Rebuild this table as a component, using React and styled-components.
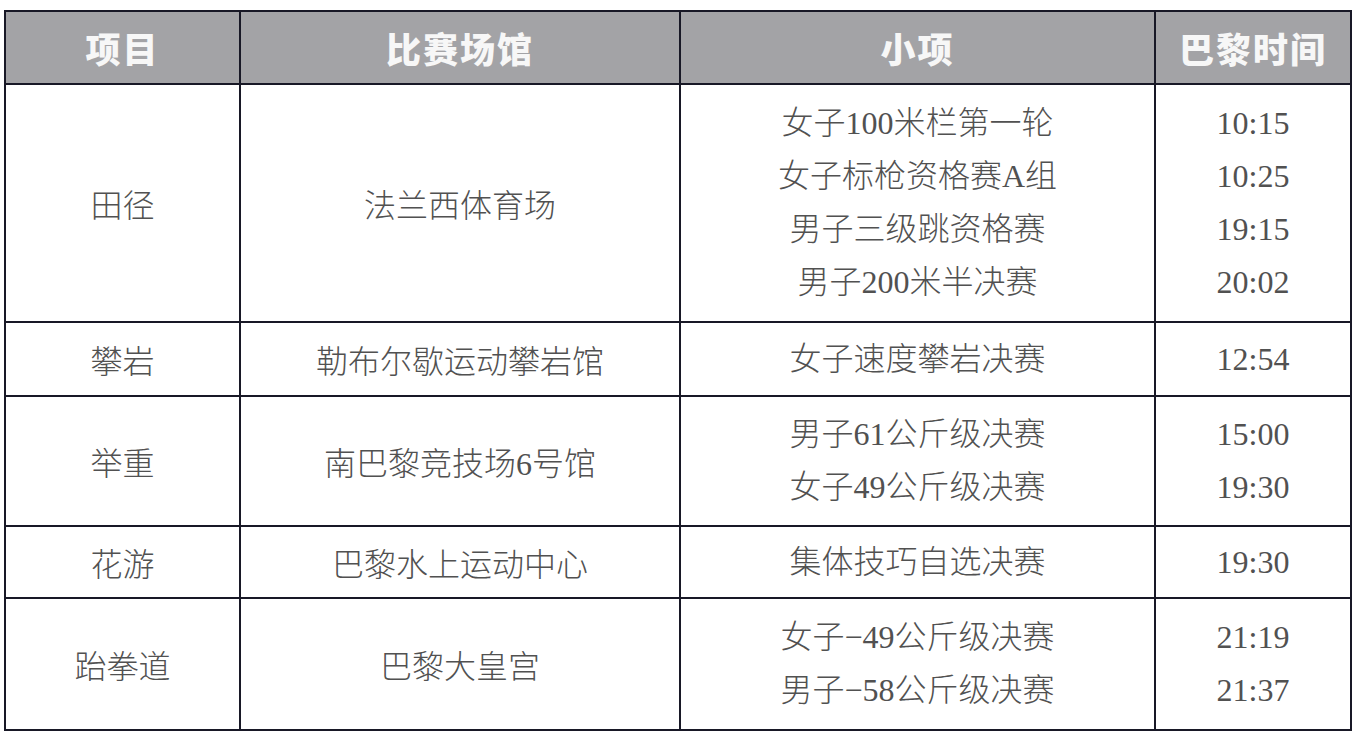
import React from 'react';
import styled, { createGlobalStyle } from 'styled-components';

const GlobalStyle = createGlobalStyle`
  html, body {
    margin: 0;
    padding: 0;
    background: #ffffff;
  }
`;

const schedule = [
  {
    sport: '田径',
    venue: '法兰西体育场',
    height: 238,
    events: [
      ['女子100米栏第一轮', '10:15'],
      ['女子标枪资格赛A组', '10:25'],
      ['男子三级跳资格赛', '19:15'],
      ['男子200米半决赛', '20:02'],
    ],
  },
  {
    sport: '攀岩',
    venue: '勒布尔歇运动攀岩馆',
    height: 74,
    events: [['女子速度攀岩决赛', '12:54']],
  },
  {
    sport: '举重',
    venue: '南巴黎竞技场6号馆',
    height: 130,
    events: [
      ['男子61公斤级决赛', '15:00'],
      ['女子49公斤级决赛', '19:30'],
    ],
  },
  {
    sport: '花游',
    venue: '巴黎水上运动中心',
    height: 72,
    events: [['集体技巧自选决赛', '19:30']],
  },
  {
    sport: '跆拳道',
    venue: '巴黎大皇宫',
    height: 132,
    events: [
      ['女子−49公斤级决赛', '21:19'],
      ['男子−58公斤级决赛', '21:37'],
    ],
  },
];

const Page = styled.div`
  padding: 10px 4px 0 4px;
  width: 1347px;
`;

const Table = styled.table`
  width: 1346px;
  table-layout: fixed;
  border-collapse: collapse;
  border: 2px solid #181826;
`;

const HeadCell = styled.th`
  height: 71px;
  padding: 0;
  background: #a3a3a6;
  color: #f7f7f7;
  font-family: "Noto Sans CJK SC", sans-serif;
  font-weight: 900;
  font-size: 35px;
  letter-spacing: 2px;
  text-align: center;
  vertical-align: middle;
  border: 2px solid #181826;
`;

const Cell = styled.td`
  height: ${(p) => p.$h - 2}px;
  padding: 0;
  text-align: center;
  vertical-align: middle;
  border: 2px solid #181826;
  font-family: "Liberation Serif", "Noto Sans CJK SC", serif;
  font-weight: 300;
  font-size: 32px;
  color: #515151;
`;

const Lines = styled.div`
  display: flex;
  flex-direction: column;
  align-items: center;
`;

const Line = styled.div`
  line-height: 53px;
  white-space: nowrap;
`;

export default function App() {
  return (
    <Page>
      <GlobalStyle />
      <Table>
        <colgroup>
          <col style={{ width: 235 }} />
          <col style={{ width: 440 }} />
          <col style={{ width: 475 }} />
          <col style={{ width: 196 }} />
        </colgroup>
        <thead>
          <tr>
            <HeadCell>项目</HeadCell>
            <HeadCell>比赛场馆</HeadCell>
            <HeadCell>小项</HeadCell>
            <HeadCell>巴黎时间</HeadCell>
          </tr>
        </thead>
        <tbody>
          {schedule.map((row) => (
            <tr key={row.sport}>
              <Cell $h={row.height}>{row.sport}</Cell>
              <Cell $h={row.height}>{row.venue}</Cell>
              <Cell $h={row.height}>
                <Lines>
                  {row.events.map(([name]) => (
                    <Line key={name}>{name}</Line>
                  ))}
                </Lines>
              </Cell>
              <Cell $h={row.height}>
                <Lines>
                  {row.events.map(([name, time]) => (
                    <Line key={name}>{time}</Line>
                  ))}
                </Lines>
              </Cell>
            </tr>
          ))}
        </tbody>
      </Table>
    </Page>
  );
}
